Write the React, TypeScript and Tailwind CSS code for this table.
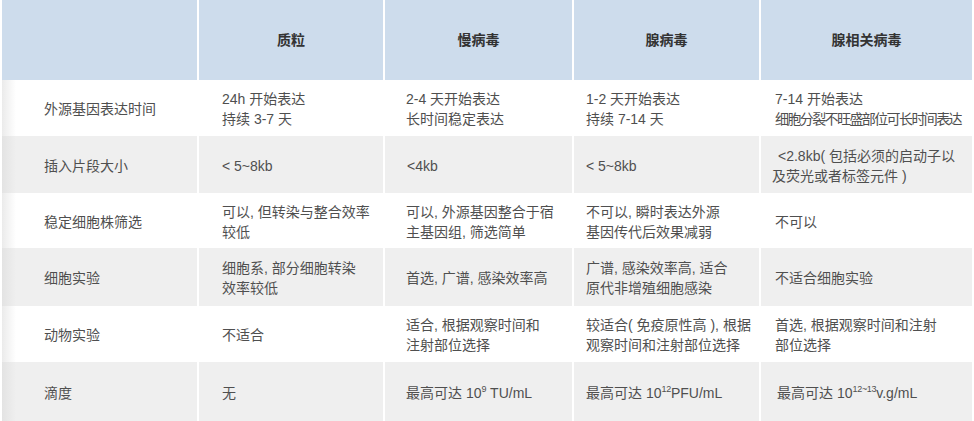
import React from "react";

type Cell = React.ReactNode;

const headers = ["", "质粒", "慢病毒", "腺病毒", "腺相关病毒"];

const Sup = ({ children }: { children: React.ReactNode }) => (
  <sup className="text-[9px] relative -top-[6px] tracking-[-0.3px]">{children}</sup>
);

const rows: { h: string; gray: boolean; cells: Cell[] }[] = [
  {
    h: "h-[56px]",
    gray: false,
    cells: [
      "外源基因表达时间",
      <>24h 开始表达<br />持续 3-7 天</>,
      <>2-4 天开始表达<br />长时间稳定表达</>,
      <>1-2 天开始表达<br />持续 7-14 天</>,
      <>7-14 开始表达<br /><span className="tracking-[-1.6px]">细胞分裂不旺盛部位可长时间表达</span></>,
    ],
  },
  {
    h: "h-[57px]",
    gray: true,
    cells: [
      "插入片段大小",
      "< 5~8kb",
      <span className="pl-[1px]">&lt;4kb</span>,
      "< 5~8kb",
      <span className="-ml-[3px] block"><span className="pl-[6px]">&lt;2.8kb( 包括必须的启动子以</span><br />及荧光或者标签元件 )</span>,
    ],
  },
  {
    h: "h-[55px]",
    gray: false,
    cells: [
      "稳定细胞株筛选",
      <>可以, 但转染与整合效率<br />较低</>,
      <>可以, 外源基因整合于宿<br />主基因组, 筛选简单</>,
      <>不可以, 瞬时表达外源<br />基因传代后效果减弱</>,
      "不可以",
    ],
  },
  {
    h: "h-[58px]",
    gray: true,
    cells: [
      "细胞实验",
      <>细胞系, 部分细胞转染<br />效率较低</>,
      "首选, 广谱, 感染效率高",
      <>广谱, 感染效率高, 适合<br />原代非增殖细胞感染</>,
      "不适合细胞实验",
    ],
  },
  {
    h: "h-[56px]",
    gray: false,
    cells: [
      "动物实验",
      "不适合",
      <>适合, 根据观察时间和<br />注射部位选择</>,
      <>较适合( 免疫原性高 ), 根据<br />观察时间和注射部位选择</>,
      <>首选, 根据观察时间和注射<br />部位选择</>,
    ],
  },
  {
    h: "h-[59px]",
    gray: true,
    cells: [
      "滴度",
      "无",
      <>最高可达 10<Sup>9</Sup> TU/mL</>,
      <>最高可达 10<Sup>12</Sup>PFU/mL</>,
      <span className="pl-[2px]">最高可达 10<Sup>12~13</Sup>v.g/mL</span>,
    ],
  },
];

const padL = ["pl-[42px]", "pl-[23px]", "pl-[21px]", "pl-[12px]", "pl-[14px]"];

export default function App() {
  return (
    <div className="w-[974px] h-[421px] overflow-hidden bg-white font-['Liberation_Sans','Noto_Sans_CJK_SC',sans-serif]">
      <div className="ml-[2px] w-[970px] grid grid-cols-[195px_184px_187px_185px_211px] gap-x-[2px]">
        {headers.map((t, i) => (
          <div
            key={"h" + i}
            className="h-[80px] bg-[#cddcec] flex items-center justify-center text-[14px] font-bold text-[#333333] pt-[1px]"
          >
            {t}
          </div>
        ))}
        {rows.map((r, ri) =>
          r.cells.map((c, ci) => {
            const bg =
              ci === 0
                ? r.gray
                  ? "bg-[linear-gradient(to_right,#e3e3e3,#efefef_14px)]"
                  : "bg-[linear-gradient(to_right,#ebebeb,#ffffff_14px)]"
                : r.gray
                ? "bg-[#efefef]"
                : "bg-white";
            return (
              <div
                key={ri + "-" + ci}
                className={`${r.h} ${bg} ${padL[ci]} flex items-center text-[14px] leading-[20px] text-[#4f4f4f] whitespace-nowrap pt-[2px]`}
              >
                <div>{c}</div>
              </div>
            );
          })
        )}
      </div>
    </div>
  );
}
